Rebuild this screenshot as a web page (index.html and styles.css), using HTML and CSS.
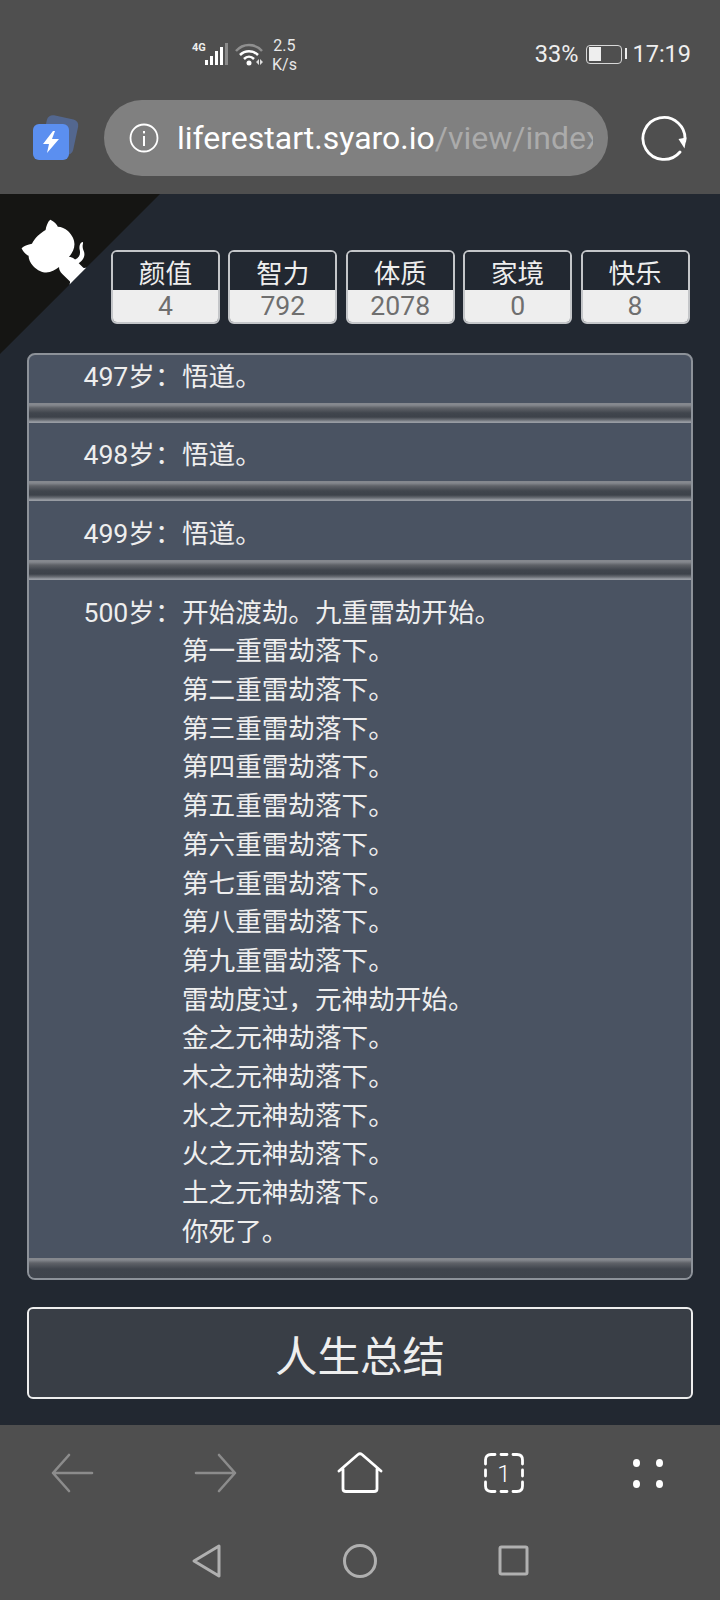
FILE: index.html
```html
<!DOCTYPE html>
<html>

<head>
    <meta charset="utf-8" />
    <title>人生重开模拟器</title>
    <link rel="stylesheet" href="styles.css">
</head>

<body>
    <section id="topbar">
        <div class="statusrow">
            <div class="statusleft">
                <span class="netlabel">4G</span>
                <svg class="signal" width="24" height="24" viewBox="0 0 24 24">
                    <rect x="0" y="18" width="3" height="5" fill="#fff" />
                    <rect x="5" y="14" width="3" height="9" fill="#fff" />
                    <rect x="10" y="9" width="3" height="14" fill="#fff" />
                    <rect x="15" y="5" width="3" height="18" fill="#fff" />
                    <rect x="20" y="1" width="3" height="22" fill="#8a8a8a" />
                </svg>
                <svg class="wifi" width="29" height="24" viewBox="0 0 29 24">
                    <path d="M1 9 C8 1 20 1 27 9" fill="none" stroke="#8f8f8f" stroke-width="2.5" />
                    <path d="M5 13 C10 8 18 8 23 13" fill="none" stroke="#fff" stroke-width="2.5" />
                    <path d="M9 17 C12 14 16 14 19 17" fill="none" stroke="#fff" stroke-width="2.5" />
                    <circle cx="14" cy="21" r="2.5" fill="#fff" />
                    <path d="M21 20 L24 17 V23 Z M25 17 L28 20 L25 23 Z" fill="#ddd" />
                </svg>
                <div class="netspeed">2.5<br />K/s</div>
            </div>
            <div class="statusright">
                <span>33%</span>
                <div class="battery">
                    <div class="batterylevel"></div>
                </div>
                <span>17:19</span>
            </div>
        </div>
        <div class="urlrow">
            <svg class="appicon" width="50" height="52" viewBox="0 0 50 52">
                <rect x="13" y="5" width="32" height="36" rx="6" fill="#53678f" transform="rotate(12 29 23)" />
                <rect x="2" y="12" width="36" height="36" rx="6" fill="#5b8ff0" />
                <path d="M22 19 L12 32 H18 L16 41 L28 27 H21 L24 19 Z" fill="#fff" />
            </svg>
            <div class="urlpill">
                <svg width="30" height="30" viewBox="0 0 30 30">
                    <circle cx="15" cy="15" r="13.5" fill="none" stroke="#fff" stroke-width="1.8" />
                    <rect x="14" y="13" width="2" height="10" fill="#fff" />
                    <rect x="14" y="8" width="2" height="2.4" fill="#fff" />
                </svg>
                <div class="urltext">liferestart.syaro.io<span class="urlpath">/view/index</span></div>
            </div>
            <svg class="reload" width="48" height="48" viewBox="0 0 48 48">
                <path d="M40 38 A21 21 0 1 1 44.8 27" fill="none" stroke="#fff" stroke-width="2.8" stroke-linecap="round" />
                <path d="M38.500 25 L46.500 23.500 L44.500 34.500 Z" fill="#fff" />
            </svg>
        </div>
    </section>

    <section id="game">
        <svg class="corner" width="160" height="160" viewBox="0 0 250 250">
            <g transform="translate(250 0) scale(-1 1)">
                <path d="M0,0 L115,115 L130,115 L142,142 L250,250 L250,0 Z" fill="#151513" />
                <path d="M128.3,109.0 C113.8,99.7 119.0,89.6 119.0,89.6 C122.0,82.7 120.5,78.6 120.5,78.6 C119.2,72.0 123.4,76.3 123.4,76.3 C127.3,80.9 125.5,87.3 125.5,87.3 C122.9,97.6 130.6,101.9 134.4,103.2" fill="#fff" />
                <path d="M115.0,115.0 C114.9,115.1 118.7,116.5 119.8,115.4 L133.7,101.6 C136.9,99.2 139.9,98.4 142.2,98.6 C133.8,88.0 127.5,74.4 143.8,58.0 C148.5,53.4 154.0,51.2 159.7,51.0 C160.3,49.4 163.2,43.6 171.4,40.1 C171.4,40.1 176.1,42.5 178.8,56.2 C183.1,58.6 187.2,61.8 190.9,65.4 C194.5,69.0 197.7,73.2 200.1,77.6 C213.8,80.2 216.3,84.9 216.3,84.9 C212.7,93.1 206.9,96.0 205.4,96.6 C205.1,102.4 203.0,107.8 198.3,112.5 C181.9,128.9 168.3,122.5 157.7,114.1 C157.9,116.9 156.7,120.9 152.7,124.9 L141.0,136.5 C139.8,137.7 141.6,141.9 141.8,141.8 Z" fill="#fff" />
            </g>
        </svg>

        <ul class="stats">
            <li><div class="statname">颜值</div><div class="statvalue">4</div></li>
            <li><div class="statname">智力</div><div class="statvalue">792</div></li>
            <li><div class="statname">体质</div><div class="statvalue">2078</div></li>
            <li><div class="statname">家境</div><div class="statvalue">0</div></li>
            <li><div class="statname">快乐</div><div class="statvalue">8</div></li>
        </ul>

        <ul class="lifelist">
            <li class="partial"><span class="age">497岁：</span><div>悟道。</div></li>
            <li><span class="age">498岁：</span><div>悟道。</div></li>
            <li><span class="age">499岁：</span><div>悟道。</div></li>
            <li>
                <span class="age">500岁：</span>
                <div>
                    开始渡劫。九重雷劫开始。<br />
                    第一重雷劫落下。<br />
                    第二重雷劫落下。<br />
                    第三重雷劫落下。<br />
                    第四重雷劫落下。<br />
                    第五重雷劫落下。<br />
                    第六重雷劫落下。<br />
                    第七重雷劫落下。<br />
                    第八重雷劫落下。<br />
                    第九重雷劫落下。<br />
                    雷劫度过，元神劫开始。<br />
                    金之元神劫落下。<br />
                    木之元神劫落下。<br />
                    水之元神劫落下。<br />
                    火之元神劫落下。<br />
                    土之元神劫落下。<br />
                    你死了。
                </div>
            </li>
        </ul>

        <button class="summary">人生总结</button>
    </section>

    <section id="bottombar">
        <div class="browsernav">
            <svg width="44" height="40" viewBox="0 0 44 40">
                <path d="M42 20 H3 M19 2 L3 20 L19 38" fill="none" stroke="#8c8c8c" stroke-width="2.6" stroke-linecap="round" stroke-linejoin="round" />
            </svg>
            <svg width="44" height="40" viewBox="0 0 44 40">
                <path d="M2 20 H41 M25 2 L41 20 L25 38" fill="none" stroke="#8c8c8c" stroke-width="2.6" stroke-linecap="round" stroke-linejoin="round" />
            </svg>
            <svg width="46" height="42" viewBox="0 0 46 42">
                <path d="M2 19 L21 2.500 Q23 1 25 2.500 L44 19 M6 17 V37 Q6 39.500 9 39.500 H37 Q40 39.500 40 37 V17" fill="none" stroke="#fff" stroke-width="2.8" stroke-linecap="round" stroke-linejoin="round" />
            </svg>
            <svg width="40" height="40" viewBox="0 0 40 40">
                <path d="M1.500 11 V7 Q1.500 1.500 7 1.500 H11 M17 1.500 H23 M29 1.500 H33 Q38.500 1.500 38.500 7 V11 M38.500 17 V23 M38.500 29 V33 Q38.500 38.500 33 38.500 H29 M23 38.500 H17 M11 38.500 H7 Q1.500 38.500 1.500 33 V29 M1.500 23 V17" fill="none" stroke="#fff" stroke-width="2.8" stroke-linecap="round" />
                <text class="tabcount" x="20" y="28.500" text-anchor="middle">1</text>
            </svg>
            <div class="menudots"><i></i><i></i><i></i><i></i></div>
        </div>
        <div class="systemnav">
            <svg width="32" height="36" viewBox="0 0 32 36">
                <path d="M28 3 L3 18 L28 33 Z" fill="none" stroke="#b0b0b0" stroke-width="3" stroke-linejoin="round" />
            </svg>
            <svg width="36" height="36" viewBox="0 0 36 36">
                <circle cx="18" cy="18" r="15.500" fill="none" stroke="#b0b0b0" stroke-width="3" />
            </svg>
            <svg width="31" height="31" viewBox="0 0 31 31">
                <rect x="2" y="2" width="27" height="27" rx="1.500" fill="none" stroke="#b0b0b0" stroke-width="3" />
            </svg>
        </div>
    </section>
</body>

</html>
```

FILE: styles.css
```css
* {
    padding: 0;
    margin: 0;
    box-sizing: border-box;
}

body {
    width: 720px;
    height: 1600px;
    background-color: #4f4f4f;
    font-family: Roboto, "Noto Sans CJK SC", sans-serif;
    overflow: hidden;
}

ul {
    list-style: none;
}

/* phone status bar + browser url bar */
#topbar {
    height: 194px;
    color: #fff;
}

.statusrow {
    height: 100px;
    padding: 36px 29px 0 192px;
    display: flex;
    justify-content: space-between;
    align-items: flex-start;
}

.statusleft {
    display: flex;
    align-items: flex-start;
}

.netlabel {
    font-size: 11px;
    font-weight: 700;
    line-height: 14px;
    margin-top: 5px;
    width: 13px;
    color: #eee;
}

.signal {
    margin-top: 6px;
}

.wifi {
    margin: 6px 0 0 6px;
}

.netspeed {
    font-size: 16px;
    line-height: 19px;
    margin-left: 8px;
    color: #e8e8e8;
    text-align: center;
}

.statusright {
    display: flex;
    align-items: center;
    font-size: 23.500px;
    line-height: 36px;
    color: #eee;
}

.battery {
    width: 36px;
    height: 19px;
    margin: 0 10px 0 8px;
    padding: 1.500px;
    border: 1.500px solid #d8d8d8;
    border-radius: 4px;
    position: relative;
}

.battery::after {
    content: "";
    position: absolute;
    right: -6px;
    top: 2.500px;
    width: 2px;
    height: 11px;
    background-color: #eee;
}

.batterylevel {
    width: 12px;
    height: 100%;
    background-color: #eee;
}

.urlrow {
    height: 76px;
    padding-left: 31px;
    display: flex;
    align-items: center;
}

.urlpill {
    width: 504px;
    height: 76px;
    margin-left: 23px;
    padding: 0 15px 0 25px;
    display: flex;
    align-items: center;
    gap: 18px;
    background-color: #808080;
    border-radius: 38px;
}

.urltext {
    font-size: 32px;
    white-space: nowrap;
    overflow: hidden;
    flex: 1;
}

.urlpath {
    color: #ababab;
}

.reload {
    margin-left: 32px;
}

/* game area */
#game {
    position: relative;
    height: 1231px;
    padding: 56px 27px 0;
    background-color: #222831;
}

.corner {
    position: absolute;
    left: 0;
    top: 0;
}

.stats {
    position: relative;
    display: flex;
    justify-content: flex-end;
    gap: 8.400px;
    padding-right: 3.500px;
}

.stats li {
    width: 109px;
    height: 74px;
    border: 2px solid #c4c6c9;
    border-radius: 6px;
    overflow: hidden;
    text-align: center;
    font-size: 26.600px;
}

.statname {
    height: 38px;
    padding-top: 6px;
    line-height: 32px;
    color: #eee;
    background-color: #222831;
}

.statvalue {
    height: 32px;
    line-height: 31px;
    color: #6f6f6f;
    background-color: #eee;
}

.lifelist {
    position: relative;
    height: 927px;
    margin-top: 29px;
    border: 2px solid #8d9299;
    border-radius: 8px;
    overflow: hidden;
    background-color: #4a5362;
    color: #eee;
    font-size: 26.600px;
    line-height: 38.700px;
}

.lifelist li {
    display: flex;
    padding: 13.500px 0 26.500px;
    background: linear-gradient(#85888e 0, #85888e 2px, #5f6268 5px, #40454d 10px, #3d424a 14px, #6b6f76 17px, #989ca3 19px) bottom / 100% 20px no-repeat;
}

.lifelist li:last-child {
    background-image: linear-gradient(#85888e 0, #85888e 2px, #5f6268 5px, #40454d 11px, #3f444c 100%);
}

.lifelist li.partial {
    margin-top: -1px;
    padding-top: 3.500px;
}

.age {
    width: 152.500px;
    flex-shrink: 0;
    text-align: right;
}

.lifelist li > div {
    margin-left: 0.500px;
}

.summary {
    display: block;
    width: 666px;
    height: 92px;
    margin-top: 27px;
    border: 2px solid #eee;
    border-radius: 6px;
    background-color: #393e46;
    color: #eee;
    font-family: inherit;
    font-size: 42.500px;
}

/* bottom browser bar + android nav */
#bottombar {
    height: 175px;
}

.browsernav {
    height: 96px;
    display: grid;
    grid-template-columns: repeat(5, 144px);
    justify-items: center;
    align-items: center;
}

.tabcount {
    font-size: 24px;
    font-weight: 300;
    fill: #fff;
}

.menudots {
    width: 31px;
    display: grid;
    grid-template-columns: 8px 8px;
    justify-content: space-between;
    row-gap: 13px;
}

.menudots i {
    width: 7px;
    height: 8px;
    border-radius: 50%;
    background-color: #fff;
}

.systemnav {
    height: 79px;
    display: grid;
    grid-template-columns: repeat(3, 153px);
    justify-content: center;
    justify-items: center;
    align-items: center;
}
```
